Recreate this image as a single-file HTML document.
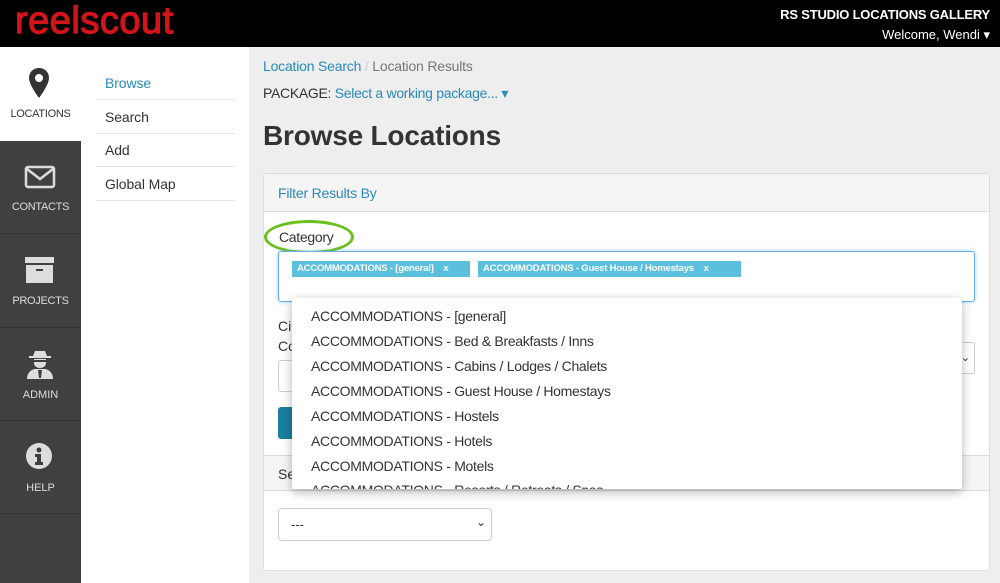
<!DOCTYPE html>
<html><head><style>
*{box-sizing:border-box;margin:0;padding:0}
body{width:1000px;height:583px;overflow:hidden;font-family:"Liberation Sans",sans-serif;background:#eee;position:relative;color:#333}
.a{position:absolute}
.hdr{left:0;top:0;width:1000px;height:47px;background:#000}
.logo{left:15px;top:1px;font-size:38px;color:#d2151b;font-weight:normal;letter-spacing:0.5px;-webkit-text-stroke:1.2px #d2151b;line-height:40px}
.side{left:0;top:47px;width:81px;height:536px;background:#404040}
.nav{left:0;width:81px;height:93px;border-bottom:1px solid #333;color:#ddd;font-size:11px;text-align:center}
.nav span{position:absolute;left:0;width:81px}
.sub{left:81px;top:47px;width:168px;height:536px;background:#fff}
.sub div{position:absolute;left:15px;width:139px;font-size:14px;border-bottom:1px solid #e5e5e5;height:34px;padding:9px 9px;letter-spacing:-0.1px}
.blue{color:#2a8ab8}
.panel{left:263px;top:173px;width:727px;height:398px;background:#fff;border:1px solid #ddd;border-radius:3px}
.tag{top:261px;height:16px;background:#5bc0de;color:#fff;font-size:9.5px;font-weight:bold;padding:2px 5px;white-space:nowrap;letter-spacing:-0.2px}
.dd{left:292px;top:298px;width:670px;height:191px;background:#fff;box-shadow:0 3px 10px rgba(0,0,0,.3);overflow:hidden;border-radius:2px}
.dd div{position:absolute;left:19px;font-size:14px;color:#333;white-space:nowrap;letter-spacing:-0.3px}
</style></head><body>
<div class="a hdr"></div>
<div class="a logo">reelscout</div>
<div class="a" style="right:10px;top:7px;color:#fff;font-weight:bold;font-size:13px;letter-spacing:-0.2px">RS STUDIO LOCATIONS GALLERY</div>
<div class="a" style="right:10px;top:27px;color:#fff;font-size:13px">Welcome, Wendi ▾</div>
<div class="a side"></div>
<div class="a nav" style="top:47px;background:#fff;color:#333;border:none;height:94px">
<svg class="a" style="left:28px;top:21px" width="22" height="30" viewBox="0 0 22 30"><path d="M11 0C5 0 1 4.5 1 10c0 7 10 20 10 20s10-13 10-20C21 4.5 17 0 11 0z" fill="#333"/><circle cx="11" cy="10" r="4" fill="#fff"/></svg>
<span style="top:61px;letter-spacing:-0.3px">LOCATIONS</span></div>
<div class="a nav" style="top:141px">
<svg class="a" style="left:24px;top:24px" width="32" height="24"><rect x="2" y="2" width="28" height="20" rx="2" fill="none" stroke="#ddd" stroke-width="2.5"/><path d="M3 4l13 10 13-10" fill="none" stroke="#ddd" stroke-width="2.5"/></svg>
<span style="top:60px;letter-spacing:-0.3px">CONTACTS</span></div>
<div class="a nav" style="top:235px">
<svg class="a" style="left:25px;top:22px" width="30" height="28"><rect x="0" y="0" width="29" height="6" fill="#ddd"/><rect x="1" y="8" width="27" height="18" fill="#ddd"/><rect x="11" y="12" width="7" height="2" fill="#404040"/></svg>
<span style="top:60px;letter-spacing:-0.3px">PROJECTS</span></div>
<div class="a nav" style="top:328px">
<svg class="a" style="left:26px;top:22px" width="28" height="30"><path d="M7 6l2-5h10l2 5h4v2H3V6z" fill="#ddd"/><path d="M8 9h12v4c0 3-3 5-6 5s-6-2-6-5z" fill="#ddd"/><rect x="8" y="10" width="12" height="2" fill="#404040"/><path d="M1 29c0-6 4-10 9-10h8c5 0 9 4 9 10z" fill="#ddd"/><path d="M12 20l1 8h2l1-8z" fill="#404040"/></svg>
<span style="top:61px">ADMIN</span></div>
<div class="a nav" style="top:421px">
<svg class="a" style="left:26px;top:22px" width="28" height="28"><circle cx="13" cy="13" r="13" fill="#ddd"/><circle cx="13" cy="7" r="2.5" fill="#404040"/><path d="M9 11h6v8h2v3H9v-3h2v-5H9z" fill="#404040"/></svg>
<span style="top:61px">HELP</span></div>
<div class="a sub">
<div style="top:19px" class="blue">Browse</div>
<div style="top:53px">Search</div>
<div style="top:86px">Add</div>
<div style="top:120px">Global Map</div>
</div>
<div class="a" style="left:263px;top:58px;font-size:14px;letter-spacing:-0.2px"><span class="blue">Location Search</span> <span style="color:#ccc">/</span> <span style="color:#777">Location Results</span></div>
<div class="a" style="left:263px;top:85px;font-size:14px;letter-spacing:-0.3px">PACKAGE: <span class="blue">Select a working package... ▾</span></div>
<div class="a" style="left:263px;top:120px;font-size:28px;font-weight:bold;color:#333;letter-spacing:-0.2px">Browse Locations</div>
<div class="a panel"></div>
<div class="a" style="left:264px;top:174px;width:725px;height:38px;background:#f5f5f5;border-bottom:1px solid #ddd"></div>
<div class="a blue" style="left:278px;top:185px;font-size:14px;letter-spacing:-0.2px">Filter Results By</div>
<div class="a" style="left:264px;top:220px;width:90px;height:34px;border:3px solid #6ac01e;border-radius:50%"></div>
<div class="a" style="left:279px;top:229px;font-size:14px;letter-spacing:-0.3px">Category</div>
<div class="a" style="left:278px;top:251px;width:697px;height:51px;border:1px solid #66afe9;border-radius:3px;box-shadow:0 0 4px rgba(102,175,233,.6);background:#fff"></div>
<div class="a tag" style="left:292px;width:178px">ACCOMMODATIONS - [general] &nbsp;&nbsp;&nbsp;x</div>
<div class="a tag" style="left:478px;width:263px">ACCOMMODATIONS - Guest House / Homestays &nbsp;&nbsp;&nbsp;x</div>
<div class="a" style="left:278px;top:318px;font-size:14px">Ci</div>
<div class="a" style="left:278px;top:338px;font-size:14px">Co</div>
<div class="a" style="left:278px;top:360px;width:30px;height:32px;border:1px solid #ccc;border-radius:3px;background:#fff"></div>
<div class="a" style="left:278px;top:407px;width:30px;height:32px;background:#1a7fa0;border-radius:3px"></div>
<div class="a" style="left:940px;top:342px;width:35px;height:32px;border:1px solid #ccc;border-radius:3px;background:#fff;font-size:11px;text-align:right;padding:8px 4px">⌄</div>
<div class="a" style="left:264px;top:455px;width:725px;height:36px;background:#f5f5f5;border-top:1px solid #ddd;border-bottom:1px solid #ddd"></div>
<div class="a" style="left:278px;top:466px;font-size:14px">Se</div>
<div class="a" style="left:278px;top:508px;width:214px;height:33px;border:1px solid #ccc;border-radius:4px;background:#fff;font-size:13px;padding:8px 12px">---<span style="position:absolute;right:5px;top:6px;font-size:12px">⌄</span></div>
<div class="a dd">
<div style="top:10px">ACCOMMODATIONS - [general]</div>
<div style="top:35px">ACCOMMODATIONS - Bed &amp; Breakfasts / Inns</div>
<div style="top:60px">ACCOMMODATIONS - Cabins / Lodges / Chalets</div>
<div style="top:85px">ACCOMMODATIONS - Guest House / Homestays</div>
<div style="top:110px">ACCOMMODATIONS - Hostels</div>
<div style="top:135px">ACCOMMODATIONS - Hotels</div>
<div style="top:160px">ACCOMMODATIONS - Motels</div>
<div style="top:184px">ACCOMMODATIONS - Resorts / Retreats / Spas</div>
</div>
</body></html>
